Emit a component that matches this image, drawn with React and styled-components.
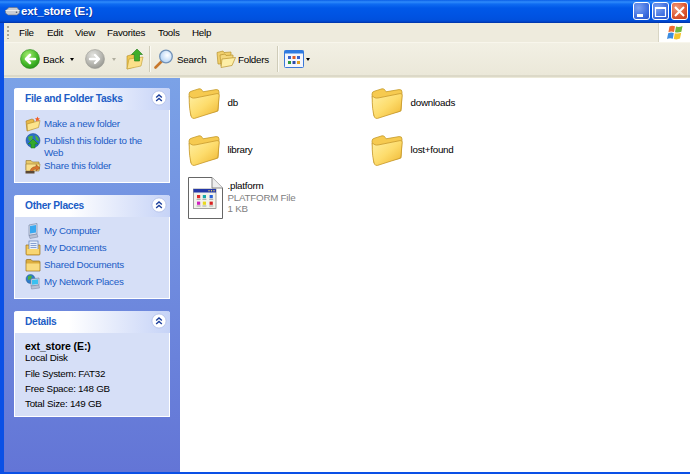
import React from 'react';
import styled, { createGlobalStyle } from 'styled-components';

const GlobalStyle = createGlobalStyle`
  html, body {
    margin: 0;
    padding: 0;
    background: #fff;
  }
  * {
    box-sizing: border-box;
  }
`;

const Window = styled.div`
  display: flex;
  flex-direction: column;
  width: 690px;
  height: 474px;
  overflow: hidden;
  font-family: 'Liberation Sans', 'DejaVu Sans', sans-serif;
  font-size: 9.8px;
  letter-spacing: -0.25px;
  color: #000;
  background: #0a50e6;
`;

const TitleBar = styled.header`
  display: flex;
  align-items: center;
  flex: 0 0 23px;
  padding: 0 2px 1px 5px;
  background: linear-gradient(180deg, #0a5ee6 0, #2f8bfb 2px, #0f6cf2 4px, #0058e8 8px, #0053e2 16px, #0050dc 20px, #0040c4 22px, #00309c 23px);
`;

const TitleText = styled.span`
  margin-left: 1px;
  flex: 1;
  font-size: 11.5px;
  font-weight: 700;
  letter-spacing: -0.15px;
  color: #fff;
  text-shadow: 1px 1px 0 #0f3aa8;
`;

const WinButtons = styled.div`
  display: flex;
  gap: 2px;
`;

const WinButton = styled.div`
  display: flex;
  align-items: center;
  justify-content: center;
  width: 17px;
  height: 18px;
  border: 1px solid #fff;
  border-radius: 3px;
  background: ${p => p.$close
    ? 'radial-gradient(circle at 30% 30%, #ef9a7c, #dc5630 60%, #c23a16)'
    : 'radial-gradient(circle at 30% 30%, #7ea2f0, #3f6fe0 60%, #2450c8)'};
`;

const Frame = styled.div`
  display: flex;
  flex-direction: column;
  flex: 1;
  min-height: 0;
  margin-left: 4px;
  background: #ece9d8;
`;

const MenuBar = styled.nav`
  display: flex;
  align-items: stretch;
  flex: 0 0 20px;
  border-bottom: 1px solid #f8f6ec;
  background: #eeebdd;
`;

const Grip = styled.div`
  flex: 0 0 2px;
  margin: 3px 0 3px 3px;
  background: repeating-linear-gradient(180deg, #a8a594 0 2px, transparent 2px 4px);
`;

const MenuItems = styled.div`
  display: flex;
  align-items: center;
  flex: 1;
  padding-left: 10px;
`;

const MenuItem = styled.span`
  flex: 0 0 ${p => p.$width}px;
`;

const LogoBox = styled.div`
  display: flex;
  align-items: center;
  justify-content: center;
  flex: 0 0 32px;
  background: #fff;
  border-left: 1px solid #d8d5c4;
`;

const Toolbar = styled.div`
  display: flex;
  align-items: center;
  flex: 0 0 34px;
  border-bottom: 2px solid #dcd9c8;
  background: linear-gradient(180deg, #f2f0e4 0, #ebe8d9 100%);
`;

const ToolGroup = styled.div`
  display: flex;
  align-items: center;
  height: 100%;
  margin-left: ${p => p.$left || 0}px;
`;

const ToolSeparator = styled.div`
  flex: 0 0 1px;
  height: 26px;
  margin-left: ${p => p.$left}px;
  background: #cfccb9;
  box-shadow: 1px 0 0 #fbfaf3;
`;

const ToolLabel = styled.span`
  flex: 0 0 ${p => p.$width}px;
  margin-left: ${p => p.$left || 3}px;
`;

const Caret = styled.span`
  width: 0;
  height: 0;
  margin-left: ${p => p.$left}px;
  border-style: solid;
  border-width: 3px 2.5px 0;
  border-color: ${p => (p.$muted ? '#b0ae9f' : '#000')} transparent transparent;
`;

const Main = styled.main`
  display: flex;
  flex: 1;
  min-height: 0;
  margin: 1px 0 0 -4px;
  border-left: 4px solid #0a50e6;
  border-bottom: 2px solid #0a50e6;
`;

const Sidebar = styled.aside`
  display: flex;
  flex-direction: column;
  gap: 12px;
  flex: 0 0 176px;
  padding: 10px 10px 0;
  background: linear-gradient(180deg, #7ba2e7 0, #6375d6 100%);
`;

const Panel = styled.section`
  border-bottom: 1px solid #fff;
  border-left: 1px solid #fff;
  border-right: 1px solid #fff;
  border-radius: 3px 3px 0 0;
`;

const PanelHeader = styled.div`
  display: flex;
  align-items: center;
  justify-content: space-between;
  height: 22px;
  margin: 0 -1px;
  padding: 0 3px 2px 11px;
  border-radius: 3px 3px 0 0;
  background: linear-gradient(90deg, #fff 0, #fff 35%, #c6d3f7 100%);
`;

const PanelTitle = styled.h2`
  margin: 0;
  font-size: 10.2px;
  font-weight: 700;
  letter-spacing: -0.28px;
  color: #215dc6;
`;

const PanelBody = styled.div`
  display: flex;
  flex-direction: column;
  padding: ${p => (p.$details ? '7px 10px' : '6px 10px 7px')};
  background: #d6dff7;
`;

const TaskRow = styled.div`
  display: flex;
  align-items: flex-start;
  min-height: 17px;
  color: #215dc6;
`;

const TaskIcon = styled.span`
  display: flex;
  flex: 0 0 19px;
  height: 16px;
`;

const TaskText = styled.span`
  padding-top: 2px;
  line-height: 11.5px;
`;

const DetailName = styled.div`
  font-size: 10.5px;
  font-weight: 700;
  letter-spacing: -0.1px;
  line-height: 12px;
`;

const DetailLine = styled.div`
  margin-top: ${p => p.$gap || 0}px;
  line-height: 11px;
`;

const Content = styled.div`
  display: grid;
  grid-template-columns: 183px 183px;
  grid-auto-rows: 47px;
  flex: 1;
  align-content: start;
  padding: 8px 0 0 8px;
  background: #fff;
`;

const Tile = styled.div`
  display: flex;
  align-items: ${p => (p.$file ? 'flex-start' : 'center')};
  height: ${p => (p.$file ? 44 : 34)}px;
  margin-top: ${p => (p.$file ? -3 : 0)}px;
`;

const TileIcon = styled.span`
  display: flex;
  flex: 0 0 39.5px;
`;

const TileLines = styled.div`
  display: flex;
  flex-direction: column;
  padding-top: ${p => (p.$file ? 3 : 0)}px;
  line-height: 11.5px;
`;

const TileSub = styled.span`
  color: #808080;
`;

const Svg = styled.svg`
  display: block;
  flex: none;
`;

const RoundIcon = ({ muted }) => {
  const id = muted ? 'roundGrey' : 'roundGreen';
  return (
    <Svg width="20" height="20" viewBox="0 0 20 20">
      <defs>
        <radialGradient id={id} cx="0.4" cy="0.3" r="0.8">
          <stop offset="0" stopColor={muted ? '#e4e4e0' : '#a6ec70'} />
          <stop offset="0.6" stopColor={muted ? '#b4b4ae' : '#45b82a'} />
          <stop offset="1" stopColor={muted ? '#8e8e88' : '#1f8a14'} />
        </radialGradient>
      </defs>
      <circle cx="10" cy="10" r="9.5" fill={`url(#${id})`} stroke={muted ? '#9a9a94' : '#2a8a1c'} strokeWidth="0.6" />
      {muted ? (
        <path d="M5 10h8M10 6l4 4-4 4" fill="none" stroke="#fff" strokeWidth="2.4" strokeLinecap="round" strokeLinejoin="round" />
      ) : (
        <path d="M15 10H7M10 6l-4 4 4 4" fill="none" stroke="#fff" strokeWidth="2.6" strokeLinecap="round" strokeLinejoin="round" />
      )}
    </Svg>
  );
};

const Folder = () => (
  <Svg width="32" height="33" viewBox="0 0 32 33">
    <defs>
      <linearGradient id="folderFront" x1="0" y1="0" x2="1" y2="1">
        <stop offset="0" stopColor="#fff0a4" />
        <stop offset="0.5" stopColor="#fddc6c" />
        <stop offset="1" stopColor="#eeb42e" />
      </linearGradient>
    </defs>
    <path d="M1 7 Q1 4.5 4 4 L11 1.8 Q13 1.4 14 3.2 L15 4.8 L28 2.6 Q31 2.2 31 5 L30 24 L6 30 L3 29 Z" fill="#f6ca50" stroke="#c49a2c" strokeWidth="0.8" />
    <path d="M1.2 9 L4 10.8 Q5 11.4 8 10.8 L29 6.6 Q31.4 6.2 31.2 8.4 L30 22 Q30 24 28 24.6 L6.5 31.4 Q4.2 31.8 3.4 30 Q1 23 1.2 9 Z" fill="url(#folderFront)" stroke="#c8992c" strokeWidth="0.8" />
  </Svg>
);

const PlatformFile = () => (
  <Svg width="35" height="42" viewBox="0 0 35 42">
    <path d="M0.5 0.5H24L34.5 11V41.5H0.5Z" fill="#fff" stroke="#666" />
    <path d="M24 0.5V11H34.5" fill="#eee" stroke="#888" />
    <rect x="5.5" y="12" width="22.5" height="19.5" fill="#f2f2ea" stroke="#6a6a6a" strokeWidth="0.6" />
    <rect x="5.5" y="12" width="22.5" height="3.5" fill="#2438a8" />
    <circle cx="21" cy="13.8" r="0.7" fill="#ffe060" />
    <circle cx="23.5" cy="13.8" r="0.7" fill="#ffe060" />
    <circle cx="26" cy="13.8" r="0.7" fill="#ffe060" />
    <rect x="9" y="18" width="3.2" height="3.2" fill="#e02828" />
    <rect x="14.8" y="18" width="3.2" height="3.2" fill="#18a8a8" />
    <rect x="21.6" y="18" width="3.2" height="3.2" fill="#2860d8" />
    <rect x="9" y="24.6" width="3.2" height="3.2" fill="#d020c0" />
    <rect x="14.8" y="24.6" width="3.2" height="3.2" fill="#e8d820" />
    <rect x="21.6" y="24.6" width="3.2" height="3.2" fill="#d82020" />
    <path d="M8.6 22.4h4M14.4 22.4h4M21.2 22.4h4M8.6 29h4M14.4 29h4M21.2 29h4" stroke="#888" strokeWidth="0.7" />
  </Svg>
);

const UpFolder = () => (
  <Svg width="18" height="22" viewBox="0 0 18 22">
    <path d="M1 8 L8 6 V19 L1 21 Z" fill="#f0c850" stroke="#b08a28" strokeWidth="0.6" />
    <path d="M3 11 L17 9 L15 18 L1 21 Z" fill="#fbe08a" stroke="#c09a30" strokeWidth="0.6" />
    <path d="M11 1 L16.5 6.5 H13.5 V13 H8.5 V6.5 H5.5 Z" fill="#3fae2a" stroke="#1e7a14" strokeWidth="0.6" />
  </Svg>
);

const SearchGlass = () => (
  <Svg width="20" height="20" viewBox="0 0 20 20">
    <defs>
      <radialGradient id="lens" cx="0.6" cy="0.4" r="0.7">
        <stop offset="0" stopColor="#fff" />
        <stop offset="1" stopColor="#a9cdf4" />
      </radialGradient>
    </defs>
    <path d="M7.5 12.5 L1.5 18.5" stroke="#c8782c" strokeWidth="2.6" strokeLinecap="round" />
    <circle cx="12" cy="7.5" r="6.3" fill="url(#lens)" stroke="#7292b8" strokeWidth="1.3" />
  </Svg>
);

const FoldersGlyph = () => (
  <Svg width="20" height="20" viewBox="0 0 20 20">
    <path d="M1 3.5 L7 2 L8 3.5 L15 3 V6 L4 15 H2 Z" fill="#f0cf6c" stroke="#b8922e" strokeWidth="0.7" />
    <path d="M4 6 L9 5 L10 6.5 L17 6 V10 L6 17 H5 Z" fill="#f4d77c" stroke="#b8922e" strokeWidth="0.7" />
    <path d="M6 10 L19.5 8.5 L16 16.5 L5 18.5 Z" fill="#fdeea6" stroke="#b8922e" strokeWidth="0.7" />
  </Svg>
);

const ViewsGlyph = () => (
  <Svg width="20" height="18" viewBox="0 0 20 18">
    <rect x="0.5" y="0.5" width="19" height="17" rx="1" fill="#f4f6fc" stroke="#3a78d8" />
    <rect x="0.5" y="0.5" width="19" height="3" fill="#2f7be0" />
    <rect x="4" y="6" width="3" height="3" fill="#3a62c8" />
    <rect x="8.5" y="6" width="3" height="3" fill="#e05a24" />
    <rect x="13" y="6" width="3" height="3" fill="#3a62c8" />
    <rect x="4" y="11" width="3" height="3" fill="#2e9a3c" />
    <rect x="8.5" y="11" width="3" height="3" fill="#2a4aa8" />
    <rect x="13" y="11" width="3" height="3" fill="#e0a024" />
  </Svg>
);

const Drive = () => (
  <Svg width="15" height="11" viewBox="0 0 15 11">
    <path d="M0.5 4.5 L4 1.5 H12 L14.5 4.5 V7 L12 9 H3 L0.5 7 Z" fill="#c8ccd4" stroke="#6c7078" strokeWidth="0.6" />
    <path d="M0.5 4.5 H14.5" stroke="#f4f4f4" strokeWidth="0.8" />
    <circle cx="11.5" cy="6.3" r="0.8" fill="#5a5e66" />
  </Svg>
);

const Flag = () => (
  <Svg width="18" height="16" viewBox="0 0 18 16">
    <path d="M3.5 1.5 Q6 0.2 9 1.3 L8 7 Q5 6 2.4 7.2 Z" fill="#ee6a30" />
    <path d="M10 1.6 Q13 2.6 16.5 1 L15.4 6.8 Q12 8 9 7.2 Z" fill="#72b83c" />
    <path d="M2.2 8.2 Q5 7 7.8 8 L6.8 13.8 Q4 12.8 1 14 Z" fill="#3d8ce0" />
    <path d="M8.8 8.2 Q12 9 15.2 7.8 L14 13.6 Q11 15 7.8 14 Z" fill="#f6c42c" />
  </Svg>
);

const CollapseButton = () => (
  <Svg width="16" height="16" viewBox="0 0 18 18">
    <circle cx="9" cy="9" r="8" fill="#fff" stroke="#b4c2ea" />
    <path d="M5.8 8.5 L9 5.5 L12.2 8.5 M5.8 12.5 L9 9.5 L12.2 12.5" fill="none" stroke="#1c3f9c" strokeWidth="1.5" />
  </Svg>
);

const NewFolderGlyph = () => (
  <Svg width="16" height="16" viewBox="0 0 16 16">
    <path d="M1 5 L7 3 L9 4 V12 L2 15 Z" fill="#e8b848" stroke="#a87c20" strokeWidth="0.6" />
    <path d="M2 8 L15 4.5 L13.5 11.5 L2.5 15 Z" fill="#fce48c" stroke="#b48a28" strokeWidth="0.6" />
    <path d="M12.5 0.5 L13.2 2.2 L15 2.6 L13.5 3.7 L13.8 5.5 L12.3 4.5 L10.7 5.3 L11.2 3.6 L9.8 2.4 L11.7 2.2 Z" fill="#f25a20" />
  </Svg>
);

const PublishGlyph = () => (
  <Svg width="16" height="16" viewBox="0 0 16 16">
    <circle cx="8" cy="7.5" r="7" fill="#2c6ec8" stroke="#1c4a94" strokeWidth="0.5" />
    <path d="M3 4 Q6 2 8 3 L7 7 L4 8 Z M10 2 Q14 4 14 8 L11 7 Z" fill="#4cb040" />
    <path d="M8 6 L13 11 H10 V15 H6 V11 H3 Z" fill="#34a82c" stroke="#167a18" strokeWidth="0.5" />
  </Svg>
);

const ShareGlyph = () => (
  <Svg width="16" height="16" viewBox="0 0 16 16">
    <path d="M1 2.5 H6 L7.5 4 H14 V12 H1 Z" fill="#e8c868" stroke="#8c7028" strokeWidth="0.6" />
    <path d="M1 6 H15 L14 13 H1 Z" fill="#fae08c" stroke="#9c7c2c" strokeWidth="0.6" />
    <path d="M5 14.5 Q5 9 11 8.5 V6.5 L15 10 L11 13 V11 Q8 11 7 14.5 Z" fill="#d8742c" stroke="#7c4018" strokeWidth="0.4" />
    <rect x="0.5" y="13" width="9" height="2.5" fill="#5c4a36" />
  </Svg>
);

const ComputerGlyph = () => (
  <Svg width="16" height="16" viewBox="0 0 16 16">
    <path d="M4 2 L12 0.5 V11 L4 12.5 Z" fill="#d4dcec" stroke="#6c7c9c" strokeWidth="0.6" />
    <path d="M5 3 L11 2 V9.5 L5 10.5 Z" fill="#39a8f0" />
    <path d="M4 12.5 L12 11 L13 14 L5 15.5 Z" fill="#b8c0d4" stroke="#7480a0" strokeWidth="0.5" />
  </Svg>
);

const DocsGlyph = () => (
  <Svg width="16" height="16" viewBox="0 0 16 16">
    <path d="M1 5 H15 V14 Q15 15 14 15 H2 Q1 15 1 14 Z" fill="#f2c454" stroke="#9c7420" strokeWidth="0.7" />
    <rect x="4" y="1" width="9" height="9" fill="#e8f0fc" stroke="#5c7cb8" strokeWidth="0.7" />
    <path d="M5.5 3.5h6M5.5 5.5h6M5.5 7.5h6" stroke="#6c8cc8" strokeWidth="0.8" />
    <path d="M2 9 H14 V14 H2 Z" fill="#f8d672" />
  </Svg>
);

const SharedGlyph = () => (
  <Svg width="16" height="16" viewBox="0 0 16 16">
    <path d="M1 3.5 Q1 2.5 2 2.5 H6 L7.5 4 H14 Q15 4 15 5 V14 H1 Z" fill="#dcae40" stroke="#8c6a1c" strokeWidth="0.7" />
    <path d="M1.5 6.5 H14.5 V13.5 H1.5 Z" fill="#f9dc80" />
  </Svg>
);

const NetworkGlyph = () => (
  <Svg width="16" height="16" viewBox="0 0 16 16">
    <circle cx="5.5" cy="5" r="4.5" fill="#2f7ec8" stroke="#1c4a84" strokeWidth="0.4" />
    <path d="M3 2.5 Q5 1 7 2 L6 5 L3 6 Z" fill="#4cb040" />
    <path d="M6 5 L14 4 V11 L6 12 Z" fill="#d4dcec" stroke="#6c7c9c" strokeWidth="0.6" />
    <path d="M7 6 L13 5.2 V10 L7 10.8 Z" fill="#39c0f0" />
    <path d="M6 12 L14 11 L14.5 14 L6.5 15 Z" fill="#b8c0d4" stroke="#7480a0" strokeWidth="0.5" />
  </Svg>
);

const menuItems = [
  ['File', 28],
  ['Edit', 28],
  ['View', 32],
  ['Favorites', 51],
  ['Tools', 34],
  ['Help', 30],
];

const taskPanels = [
  {
    title: 'File and Folder Tasks',
    rows: [
      [<NewFolderGlyph />, 'Make a new folder'],
      [<PublishGlyph />, <>Publish this folder to the<br />Web</>, 'publish'],
      [<ShareGlyph />, 'Share this folder'],
    ],
  },
  {
    title: 'Other Places',
    rows: [
      [<ComputerGlyph />, 'My Computer'],
      [<DocsGlyph />, 'My Documents'],
      [<SharedGlyph />, 'Shared Documents'],
      [<NetworkGlyph />, 'My Network Places'],
    ],
  },
];

const folders = ['db', 'downloads', 'library', 'lost+found'];

const App = () => (
  <Window>
    <GlobalStyle />
    <TitleBar>
      <Drive />
      <TitleText>ext_store (E:)</TitleText>
      <WinButtons>
        <WinButton>
          <Svg width="13" height="13" viewBox="0 0 13 13"><rect x="2" y="9" width="6" height="3" fill="#fff" /></Svg>
        </WinButton>
        <WinButton>
          <Svg width="13" height="13" viewBox="0 0 13 13"><path d="M1.5 2.5H11.5V11.5H1.5ZM1.5 3.5H11.5" fill="none" stroke="#fff" strokeWidth="1.2" /></Svg>
        </WinButton>
        <WinButton $close>
          <Svg width="13" height="13" viewBox="0 0 13 13"><path d="M2 2L11 11M11 2L2 11" stroke="#fff" strokeWidth="2" /></Svg>
        </WinButton>
      </WinButtons>
    </TitleBar>
    <Frame>
      <MenuBar>
        <Grip />
        <MenuItems>
          {menuItems.map(([label, width]) => (
            <MenuItem key={label} $width={width}>{label}</MenuItem>
          ))}
        </MenuItems>
        <LogoBox><Flag /></LogoBox>
      </MenuBar>
      <Toolbar>
        <Grip />
        <ToolGroup $left={11}>
          <RoundIcon />
          <ToolLabel $width={24}>Back</ToolLabel>
          <Caret $left={3} />
        </ToolGroup>
        <ToolGroup $left={11}>
          <RoundIcon muted />
          <Caret $left={7} $muted />
        </ToolGroup>
        <ToolGroup $left={10}>
          <UpFolder />
        </ToolGroup>
        <ToolSeparator $left={5} />
        <ToolGroup $left={4}>
          <SearchGlass />
          <ToolLabel $width={30}>Search</ToolLabel>
        </ToolGroup>
        <ToolGroup $left={9}>
          <FoldersGlyph />
          <ToolLabel $width={30} $left={2}>Folders</ToolLabel>
        </ToolGroup>
        <ToolSeparator $left={8} />
        <ToolGroup $left={6}>
          <ViewsGlyph />
          <Caret $left={2} />
        </ToolGroup>
      </Toolbar>
      <Main>
        <Sidebar>
          {taskPanels.map(panel => (
            <Panel key={panel.title}>
              <PanelHeader>
                <PanelTitle>{panel.title}</PanelTitle>
                <CollapseButton />
              </PanelHeader>
              <PanelBody>
                {panel.rows.map(([icon, label, key]) => (
                  <TaskRow key={key || label}>
                    <TaskIcon>{icon}</TaskIcon>
                    <TaskText>{label}</TaskText>
                  </TaskRow>
                ))}
              </PanelBody>
            </Panel>
          ))}
          <Panel>
            <PanelHeader>
              <PanelTitle>Details</PanelTitle>
              <CollapseButton />
            </PanelHeader>
            <PanelBody $details>
              <DetailName>ext_store (E:)</DetailName>
              <DetailLine>Local Disk</DetailLine>
              <DetailLine $gap={5}>File System: FAT32</DetailLine>
              <DetailLine $gap={4}>Free Space: 148 GB</DetailLine>
              <DetailLine $gap={4}>Total Size: 149 GB</DetailLine>
            </PanelBody>
          </Panel>
        </Sidebar>
        <Content>
          {folders.map(name => (
            <Tile key={name}>
              <TileIcon><Folder /></TileIcon>
              <TileLines>{name}</TileLines>
            </Tile>
          ))}
          <Tile $file>
            <TileIcon><PlatformFile /></TileIcon>
            <TileLines $file>
              <span>.platform</span>
              <TileSub>PLATFORM File</TileSub>
              <TileSub>1 KB</TileSub>
            </TileLines>
          </Tile>
        </Content>
      </Main>
    </Frame>
  </Window>
);

export default App;
